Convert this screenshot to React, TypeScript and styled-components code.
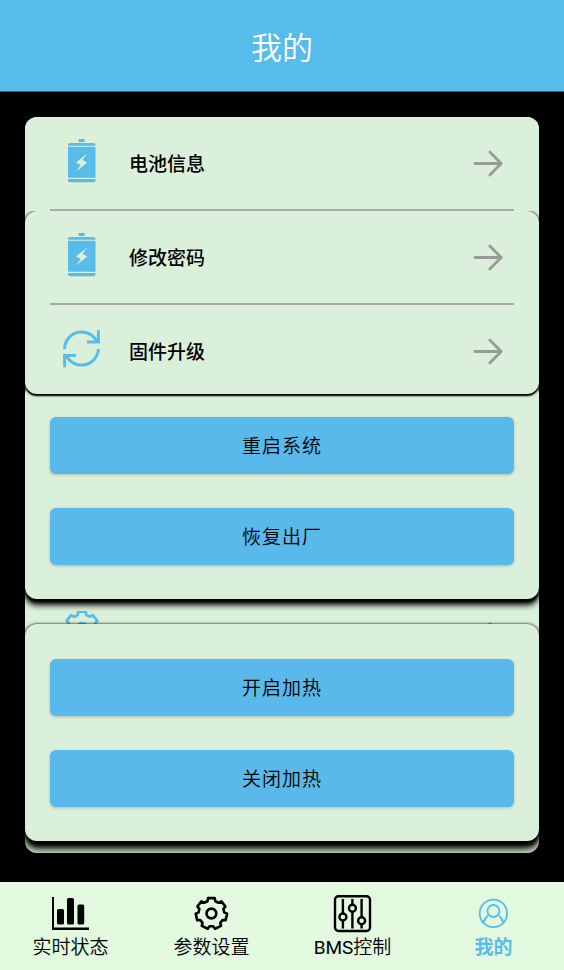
import React from "react";
import styled, { createGlobalStyle } from "styled-components";

const blue = "#58bcea";
const mint = "#daf0da";

const GlobalStyle = createGlobalStyle`
  *, *::before, *::after { box-sizing: border-box; }
  body {
    margin: 0;
    background: #000;
    color: #000;
    font-family: Roboto, "Noto Sans CJK SC", sans-serif;
  }
  button { font: inherit; color: inherit; }
`;

const Screen = styled.div`
  display: flex;
  flex-direction: column;
  min-height: 100vh;
`;

const Header = styled.header`
  display: flex;
  align-items: center;
  justify-content: center;
  padding: 26px 16px 19px;
  background: ${blue};
  border-bottom: 1px solid #2c6482;
`;

const Title = styled.h1`
  margin: 0;
  color: #fff;
  font-size: 31px;
  font-weight: 350;
  line-height: 46px;
`;

const Main = styled.main`
  flex: 1;
  padding: 25px 25px 29px;
`;

const BaseCard = styled.section`
  display: flex;
  flex-direction: column;
  padding-bottom: 12px;
  overflow: hidden;
  border-radius: 12px;
  background: ${mint};
`;

const TopSection = styled.div`
  position: relative;
  z-index: 4;
  background: ${mint};
`;

const Card = styled.section<{ $depth: number; $layer: number }>`
  position: relative;
  z-index: ${(p) => p.$layer};
  border-radius: 12px;
  background: ${mint};
  box-shadow:
    0 0 3px #000,
    0 ${(p) => p.$depth / 2}px ${(p) => p.$depth / 2}px #000,
    0 ${(p) => p.$depth}px ${(p) => p.$depth}px #000;
`;

const ActionCard = styled(Card)<{ $overlap: number }>`
  display: flex;
  flex-direction: column;
  gap: 34px;
  margin-top: -${(p) => p.$overlap}px;
  padding: 35px 25px 34px;
`;

const CoveredSection = styled.div`
  margin-top: -10px;
`;

const Row = styled.button<{ $last?: boolean }>`
  display: flex;
  align-items: center;
  gap: 25px;
  width: calc(100% - 50px);
  margin: 0 25px;
  padding: 22px 10px ${(p) => (p.$last ? 19 : 22)}px;
  border: 0;
  border-bottom: ${(p) => (p.$last ? "0" : "2px solid #aaa")};
  background: none;
  text-align: left;
  cursor: pointer;
`;

const RowLabel = styled.span`
  flex: 1;
  min-height: 32px;
  padding-top: 4px;
  font-size: 19px;
  font-weight: 500;
  line-height: 28px;
`;

const ActionButton = styled.button`
  padding: 16px 16px 13px;
  border: 0;
  border-radius: 6px;
  background: #58b9ea;
  box-shadow: 0 1px 3px rgba(0, 0, 0, 0.22);
  font-size: 19px;
  font-weight: 350;
  line-height: 28px;
  letter-spacing: 1px;
  cursor: pointer;
`;

const TabBar = styled.nav`
  display: grid;
  grid-template-columns: repeat(4, 1fr);
  background: #e2f9e0;
`;

const Tab = styled.a<{ $active?: boolean }>`
  display: flex;
  flex-direction: column;
  align-items: center;
  padding: 12px 0 8px;
  color: ${(p) => (p.$active ? blue : "#000")};
  font-size: 19px;
  font-weight: ${(p) => (p.$active ? 700 : 350)};
  line-height: 28px;
  text-decoration: none;
`;

const Latin = styled.span`
  font-weight: 400;
`;

const Icon = styled.svg`
  display: block;
  flex: none;
`;

const BatteryIcon = () => (
  <Icon width="44" height="48" viewBox="0 0 44 48" fill={blue} aria-hidden="true">
    <rect x="18.5" y="0" width="6.2" height="3" rx="0.8" />
    <path d="M10 4h23.5a2 2 0 0 1 2 2v0.8H8V6a2 2 0 0 1 2-2z" />
    <path d="M8 7.8h27.5v31H8zM27.2 14.4 16 23.4l4.8 2.6-4.8 6.4 11.4-8.8-4.9-2.6z" fillRule="evenodd" />
    <path d="M8 40h27.5v1.2a2 2 0 0 1-2 2H10a2 2 0 0 1-2-2z" />
  </Icon>
);

const RefreshIcon = () => (
  <Icon width="44" height="48" viewBox="0 0 44 48" fill="none" stroke={blue} strokeWidth="3" aria-hidden="true">
    <path d="M4.6 22A17 17 0 0 1 37.2 15.2" />
    <path d="M38.4 3.3V15H27" />
    <path d="M38.4 22A17 17 0 0 1 6.2 28.6" />
    <path d="M4.6 40.2V28.5H16" />
  </Icon>
);

const ArrowIcon = () => (
  <Icon
    width="32" height="32" viewBox="0 0 32 32" fill="none" stroke="#999"
    strokeWidth="2.8" strokeLinecap="round" strokeLinejoin="round" aria-hidden="true"
  >
    <path d="M3 16.5H29.2M17.8 5 29.2 16.5 17.8 28" />
  </Icon>
);

const gearOutline = (() => {
  const teeth = 7;
  const profile: [number, number][] = [
    [-0.31, 12.9], [-0.21, 15.7], [0.21, 15.7], [0.31, 12.9],
  ];
  const points: string[] = [];
  for (let i = 0; i < teeth; i += 1) {
    const centre = (i * 2 * Math.PI) / teeth - Math.PI / 2;
    profile.forEach(([offset, radius]) => {
      const angle = centre + offset;
      points.push(`${(radius * Math.cos(angle)).toFixed(2)} ${(radius * Math.sin(angle)).toFixed(2)}`);
    });
  }
  return `M${points.join("L")}Z`;
})();

const GearIcon = ({ width, height, viewBox, color }: { width: number; height: number; viewBox: string; color: string }) => (
  <Icon
    width={width} height={height} viewBox={viewBox} fill="none" stroke={color}
    strokeWidth="2.6" strokeLinejoin="round" aria-hidden="true"
  >
    <path d={gearOutline} />
    <circle r="4.9" />
  </Icon>
);

const ChartIcon = () => (
  <Icon width="41" height="40" viewBox="0 0 41 40" aria-hidden="true">
    <path d="M2 3h2v30.5h35V36H2z" />
    <rect x="7" y="15" width="7" height="15.5" rx="1.6" />
    <rect x="17" y="4" width="7" height="26.5" rx="1.6" />
    <rect x="27.5" y="10.5" width="6.7" height="20" rx="1.6" />
  </Icon>
);

const SlidersIcon = () => (
  <Icon width="41" height="40" viewBox="0 0 41 40" fill="none" stroke="#000" strokeWidth="2.4" aria-hidden="true">
    <rect x="3" y="2.2" width="35" height="34.8" rx="3.5" />
    <path d="M10.9 5v29.5M20.4 5v29.5M29.6 5v29.5" />
    <g fill="#e2f9e0">
      <circle cx="10.9" cy="23" r="3.5" />
      <circle cx="20.4" cy="14.3" r="3.5" />
      <circle cx="29.6" cy="26.8" r="3.5" />
    </g>
  </Icon>
);

const UserIcon = () => (
  <Icon width="41" height="40" viewBox="0 0 41 40" fill="none" stroke={blue} strokeWidth="1.8" strokeLinecap="round" aria-hidden="true">
    <circle cx="20.4" cy="19.4" r="13.7" />
    <circle cx="20.4" cy="17" r="6" />
    <path d="M14.4 22.2Q11.2 24.5 10.6 28.6M26.4 22.2Q29.6 24.5 30.2 28.6" />
  </Icon>
);

export default function App() {
  return (
    <>
      <GlobalStyle />
      <Screen>
        <Header>
          <Title>我的</Title>
        </Header>
        <Main>
          <BaseCard>
            <TopSection>
              <Row type="button">
                <BatteryIcon />
                <RowLabel>电池信息</RowLabel>
                <ArrowIcon />
              </Row>
            </TopSection>
            <Card $depth={2} $layer={3}>
              <Row type="button">
                <BatteryIcon />
                <RowLabel>修改密码</RowLabel>
                <ArrowIcon />
              </Row>
              <Row type="button" $last>
                <RefreshIcon />
                <RowLabel>固件升级</RowLabel>
                <ArrowIcon />
              </Row>
            </Card>
            <ActionCard $depth={6} $overlap={12} $layer={2}>
              <ActionButton type="button">重启系统</ActionButton>
              <ActionButton type="button">恢复出厂</ActionButton>
            </ActionCard>
            <CoveredSection>
              <Row type="button" $last aria-label="设置">
                <GearIcon width={44} height={48} viewBox="-20 -16 40 44" color={blue} />
                <RowLabel />
                <ArrowIcon />
              </Row>
            </CoveredSection>
            <ActionCard $depth={8} $overlap={54} $layer={2}>
              <ActionButton type="button">开启加热</ActionButton>
              <ActionButton type="button">关闭加热</ActionButton>
            </ActionCard>
          </BaseCard>
        </Main>
        <TabBar>
          <Tab href="#status">
            <ChartIcon />
            实时状态
          </Tab>
          <Tab href="#params">
            <GearIcon width={41} height={40} viewBox="-20.4 -19.5 41 40" color="#000" />
            参数设置
          </Tab>
          <Tab href="#bms">
            <SlidersIcon />
            <span><Latin>BMS</Latin>控制</span>
          </Tab>
          <Tab href="#mine" $active aria-current="page">
            <UserIcon />
            我的
          </Tab>
        </TabBar>
      </Screen>
    </>
  );
}
